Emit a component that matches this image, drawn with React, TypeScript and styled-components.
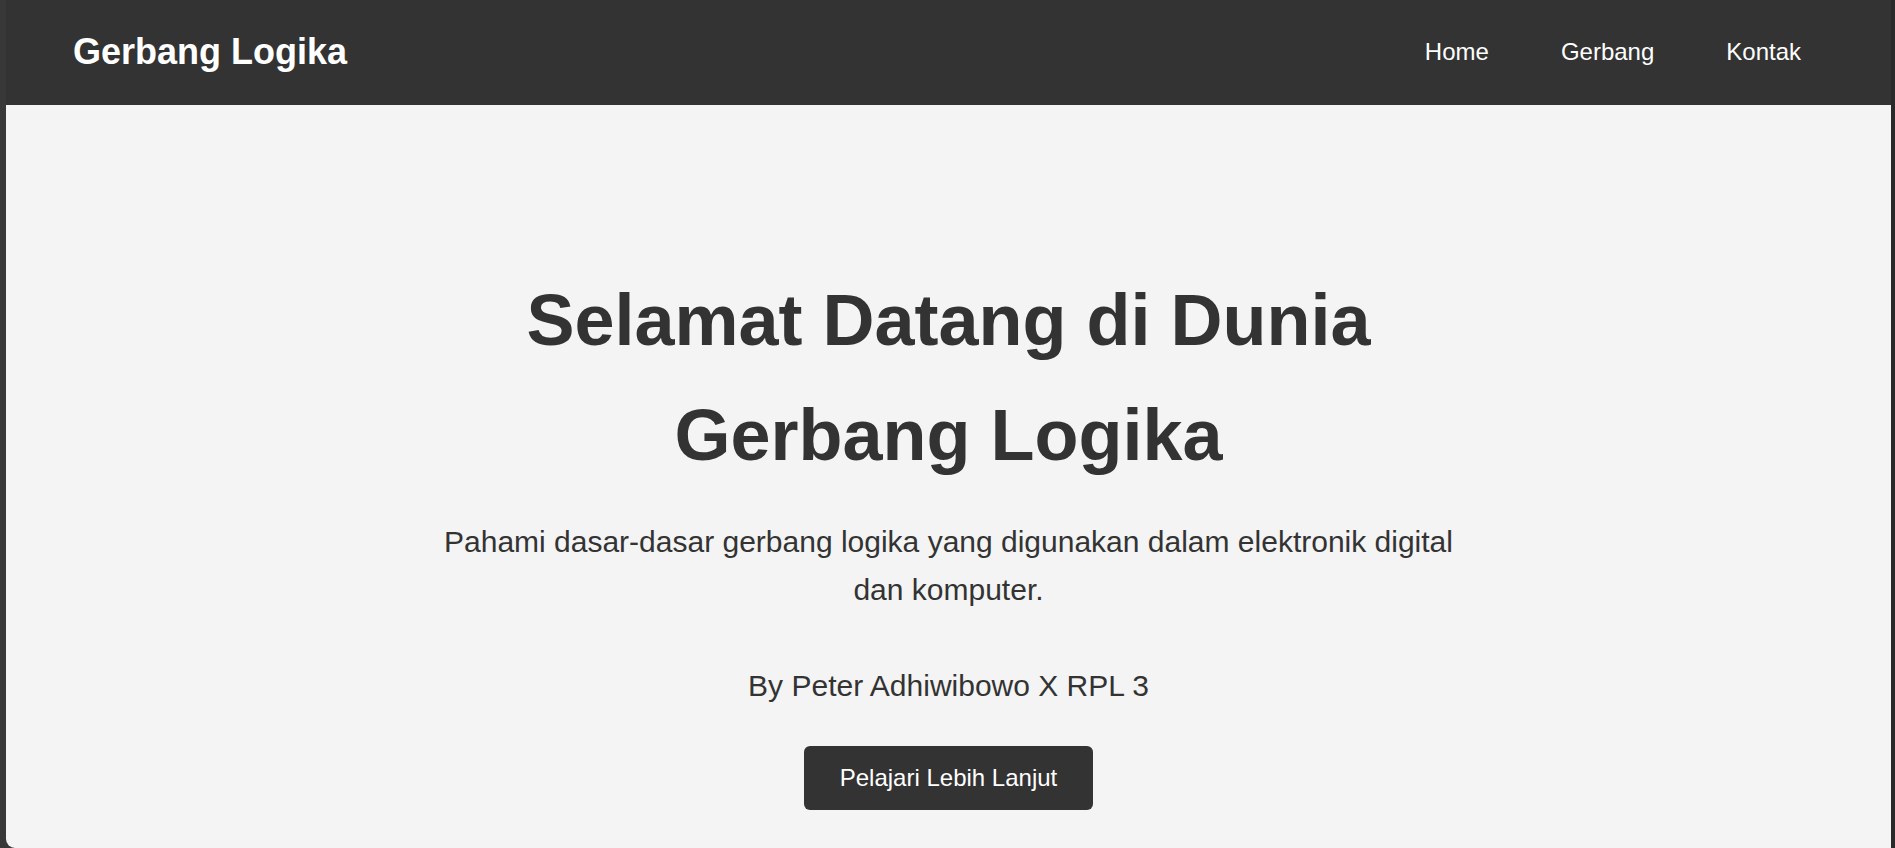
import React from "react";
import styled, { createGlobalStyle } from "styled-components";

const GlobalStyle = createGlobalStyle`
  html, body {
    margin: 0;
    padding: 0;
    height: 100%;
    overflow: hidden;
    background: #383838;
  }
  body {
    font-family: "Liberation Sans", Arial, sans-serif;
  }
  * { box-sizing: border-box; }
`;

const Frame = styled.div`
  display: flex;
  height: 100vh;
  padding-left: 6px;
  background: #383838;
`;

const Window = styled.div`
  flex: 1;
  display: flex;
  flex-direction: column;
  background: #f4f4f4;
  border-bottom-left-radius: 9px;
  overflow: hidden;
`;

const RightEdge = styled.div`
  width: 4px;
  background: #2a2a2a;
`;

const Header = styled.header`
  height: 105px;
  flex: none;
  background: #333333;
  display: flex;
  align-items: center;
  justify-content: space-between;
  padding: 0 90px 1px 67px;
`;

const Brand = styled.h1`
  margin: 0;
  color: #ffffff;
  font-size: 36px;
  font-weight: 700;
`;

const Nav = styled.nav`
  display: flex;
  gap: 72px;
`;

const NavLink = styled.a`
  color: #ffffff;
  font-size: 24px;
  text-decoration: none;
`;

const Hero = styled.main`
  flex: 1;
  display: flex;
  flex-direction: column;
  align-items: center;
  text-align: center;
  padding-top: 158px;
  color: #333333;
`;

const Content = styled.div`
  max-width: 1040px;
  display: flex;
  flex-direction: column;
  align-items: center;
`;

const Title = styled.h2`
  margin: 0 0 25px;
  font-size: 72px;
  font-weight: 700;
  line-height: 1.6;
`;

const Lead = styled.p<{ $gap?: number }>`
  margin: ${(p) => p.$gap ?? 0}px 0 0;
  font-size: 30px;
  line-height: 1.6;
`;

const Button = styled.a`
  margin-top: 36px;
  display: inline-block;
  background: #333333;
  color: #ffffff;
  font-size: 24px;
  padding: 18px 36px;
  border-radius: 6px;
  text-decoration: none;
`;

export default function App() {
  return (
    <>
      <GlobalStyle />
      <Frame>
        <Window>
          <Header>
            <Brand>Gerbang Logika</Brand>
            <Nav>
              <NavLink href="#home">Home</NavLink>
              <NavLink href="#gerbang">Gerbang</NavLink>
              <NavLink href="#kontak">Kontak</NavLink>
            </Nav>
          </Header>
          <Hero>
            <Content>
              <Title>Selamat Datang di Dunia Gerbang Logika</Title>
              <Lead>
                Pahami dasar-dasar gerbang logika yang digunakan dalam elektronik digital dan komputer.
              </Lead>
              <Lead $gap={48}>By Peter Adhiwibowo X RPL 3</Lead>
              <Button href="#gerbang">Pelajari Lebih Lanjut</Button>
            </Content>
          </Hero>
        </Window>
        <RightEdge />
      </Frame>
    </>
  );
}
